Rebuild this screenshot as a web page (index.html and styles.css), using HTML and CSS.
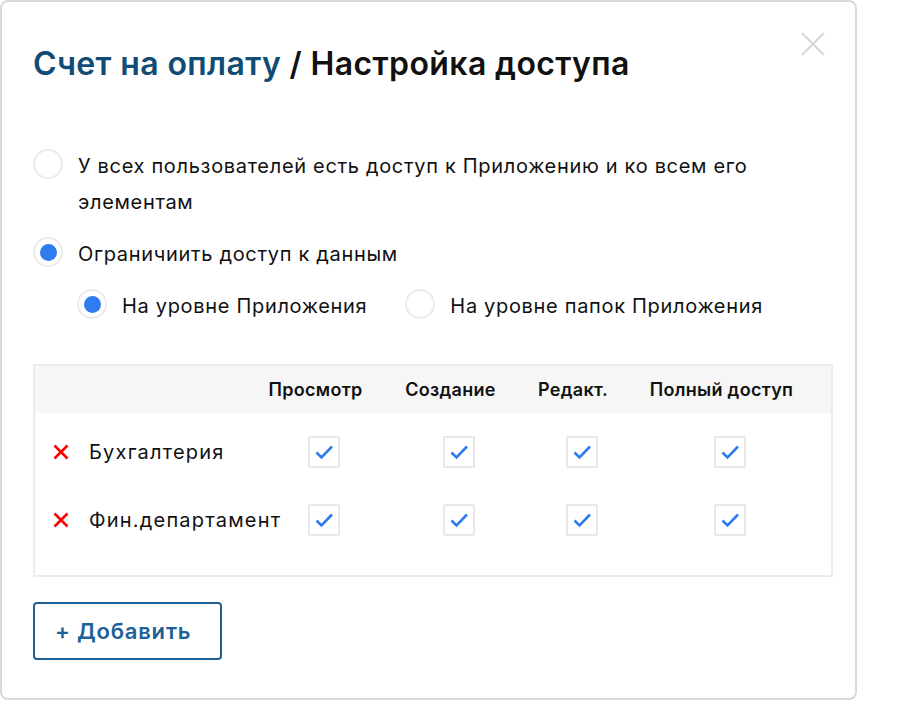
FILE: index.html
```html
<!DOCTYPE html>
<html lang="ru">
<head>
    <meta charset="UTF-8">
    <meta name="viewport" content="width=device-width, initial-scale=1.0">
    <title>Настройка доступа</title>
    <link rel="stylesheet" href="styles.css">
</head>
<body>
    <div class="dialog">
        <button class="close-btn" aria-label="Закрыть">
            <svg width="24" height="24" viewBox="0 0 24 24">
                <path d="M1 1 L23 23 M23 1 L1 23" stroke="#d6d6d6" stroke-width="2" fill="none"/>
            </svg>
        </button>

        <h1 class="dialog-title"><span class="crumb">Счет на оплату</span> / Настройка доступа</h1>

        <!-- варианты доступа -->
        <div class="options">
            <label class="option">
                <span class="radio"></span>
                <span class="option-text">У всех пользователей есть доступ к Приложению и ко всем его элементам</span>
            </label>
            <label class="option">
                <span class="radio checked"></span>
                <span class="option-text">Ограничиить доступ к данным</span>
            </label>
            <div class="sub-options">
                <label class="option">
                    <span class="radio checked"></span>
                    <span class="option-text">На уровне Приложения</span>
                </label>
                <label class="option">
                    <span class="radio"></span>
                    <span class="option-text">На уровне папок Приложения</span>
                </label>
            </div>
        </div>

        <div class="access-table">
            <div class="table-row table-head">
                <div></div>
                <div class="head-cell">Просмотр</div>
                <div class="head-cell">Создание</div>
                <div class="head-cell">Редакт.</div>
                <div class="head-cell">Полный доступ</div>
            </div>

            <div class="table-row">
                <div class="name-cell">
                    <svg class="remove" width="16" height="16" viewBox="0 0 16 16">
                        <path d="M1.5 1.5 L14.5 14.5 M14.5 1.5 L1.5 14.5" stroke="#ff0000" stroke-width="2.6" fill="none"/>
                    </svg>
                    Бухгалтерия
                </div>
                <div class="check-cell"><span class="checkbox"><svg width="32" height="32" viewBox="0 0 32 32"><path d="M8.5 16.5 L13.5 21.5 L24 10.5" stroke="#2f7cf1" stroke-width="2.6" fill="none"/></svg></span></div>
                <div class="check-cell"><span class="checkbox"><svg width="32" height="32" viewBox="0 0 32 32"><path d="M8.5 16.5 L13.5 21.5 L24 10.5" stroke="#2f7cf1" stroke-width="2.6" fill="none"/></svg></span></div>
                <div class="check-cell"><span class="checkbox"><svg width="32" height="32" viewBox="0 0 32 32"><path d="M8.5 16.5 L13.5 21.5 L24 10.5" stroke="#2f7cf1" stroke-width="2.6" fill="none"/></svg></span></div>
                <div class="check-cell"><span class="checkbox"><svg width="32" height="32" viewBox="0 0 32 32"><path d="M8.5 16.5 L13.5 21.5 L24 10.5" stroke="#2f7cf1" stroke-width="2.6" fill="none"/></svg></span></div>
            </div>

            <div class="table-row">
                <div class="name-cell">
                    <svg class="remove" width="16" height="16" viewBox="0 0 16 16">
                        <path d="M1.5 1.5 L14.5 14.5 M14.5 1.5 L1.5 14.5" stroke="#ff0000" stroke-width="2.6" fill="none"/>
                    </svg>
                    Фин.департамент
                </div>
                <div class="check-cell"><span class="checkbox"><svg width="32" height="32" viewBox="0 0 32 32"><path d="M8.5 16.5 L13.5 21.5 L24 10.5" stroke="#2f7cf1" stroke-width="2.6" fill="none"/></svg></span></div>
                <div class="check-cell"><span class="checkbox"><svg width="32" height="32" viewBox="0 0 32 32"><path d="M8.5 16.5 L13.5 21.5 L24 10.5" stroke="#2f7cf1" stroke-width="2.6" fill="none"/></svg></span></div>
                <div class="check-cell"><span class="checkbox"><svg width="32" height="32" viewBox="0 0 32 32"><path d="M8.5 16.5 L13.5 21.5 L24 10.5" stroke="#2f7cf1" stroke-width="2.6" fill="none"/></svg></span></div>
                <div class="check-cell"><span class="checkbox"><svg width="32" height="32" viewBox="0 0 32 32"><path d="M8.5 16.5 L13.5 21.5 L24 10.5" stroke="#2f7cf1" stroke-width="2.6" fill="none"/></svg></span></div>
            </div>
        </div>

        <button class="add-btn">+ Добавить</button>
    </div>
</body>
</html>
```

FILE: styles.css
```css
body {
    margin: 0;
    background-color: #fff;
    font-family: Inter, "Noto Sans", Arial, sans-serif;
    color: #111;
}

.dialog {
    position: relative;
    width: 857px;
    height: 700px;
    box-sizing: border-box;
    border: 2px solid #d9d9d9;
    border-radius: 8px;
    padding: 42px 22px 0 31px;
}

.close-btn {
    position: absolute;
    top: 30px;
    right: 30px;
    padding: 0;
    border: none;
    background: transparent;
    cursor: pointer;
    line-height: 0;
}

.dialog-title {
    margin: 0;
    font-size: 32px;
    line-height: 40px;
    font-weight: 600;
    letter-spacing: 0.38px;
    color: #111;
}

.dialog-title .crumb {
    color: #114c76;
}

.options {
    margin-top: 64px;
    display: flex;
    flex-direction: column;
    gap: 16px;
}

.option {
    display: flex;
    align-items: flex-start;
    gap: 15px;
    font-size: 20px;
    line-height: 36px;
    letter-spacing: 0.68px;
    cursor: pointer;
}

.option-text {
    max-width: 700px;
}

.radio {
    flex: none;
    width: 30px;
    height: 30px;
    margin-top: 1px;
    box-sizing: border-box;
    border: 2px solid #ebebeb;
    border-radius: 50%;
    display: flex;
    align-items: center;
    justify-content: center;
}

.radio.checked::after {
    content: "";
    width: 17px;
    height: 17px;
    border-radius: 50%;
    background-color: #2f7cf1;
}

.sub-options {
    display: flex;
    gap: 38px;
    padding-left: 44px;
}

.access-table {
    margin-top: 40px;
    border: 2px solid #ececec;
    padding-bottom: 21px;
}

.table-row {
    display: grid;
    grid-template-columns: 212px 137px 133px 112px 185px;
    align-items: center;
    height: 68px;
}

.table-row.table-head {
    height: 47px;
    background-color: #f6f6f6;
    margin-bottom: 5px;
}

.head-cell {
    text-align: center;
    font-size: 18px;
    font-weight: 600;
    letter-spacing: 0.3px;
}

.name-cell {
    display: flex;
    align-items: center;
    gap: 20px;
    padding-left: 18px;
    font-size: 20px;
    letter-spacing: 1.2px;
    white-space: nowrap;
}

.name-cell .remove {
    flex: none;
}

.check-cell {
    display: flex;
    justify-content: center;
    padding-left: 17px;
}

.checkbox {
    width: 32px;
    height: 32px;
    box-sizing: border-box;
    border: 2px solid #e8e8e8;
    border-radius: 2px;
    display: flex;
    align-items: center;
    justify-content: center;
}

.checkbox svg {
    flex: none;
}

.add-btn {
    margin-top: 25px;
    width: 189px;
    height: 58px;
    padding: 0 0 0 20px;
    text-align: left;
    border: 2px solid #1d6196;
    border-radius: 4px;
    background: #fff;
    color: #1d6196;
    font-family: inherit;
    font-size: 22px;
    font-weight: 600;
    letter-spacing: 0.8px;
    cursor: pointer;
}
```
